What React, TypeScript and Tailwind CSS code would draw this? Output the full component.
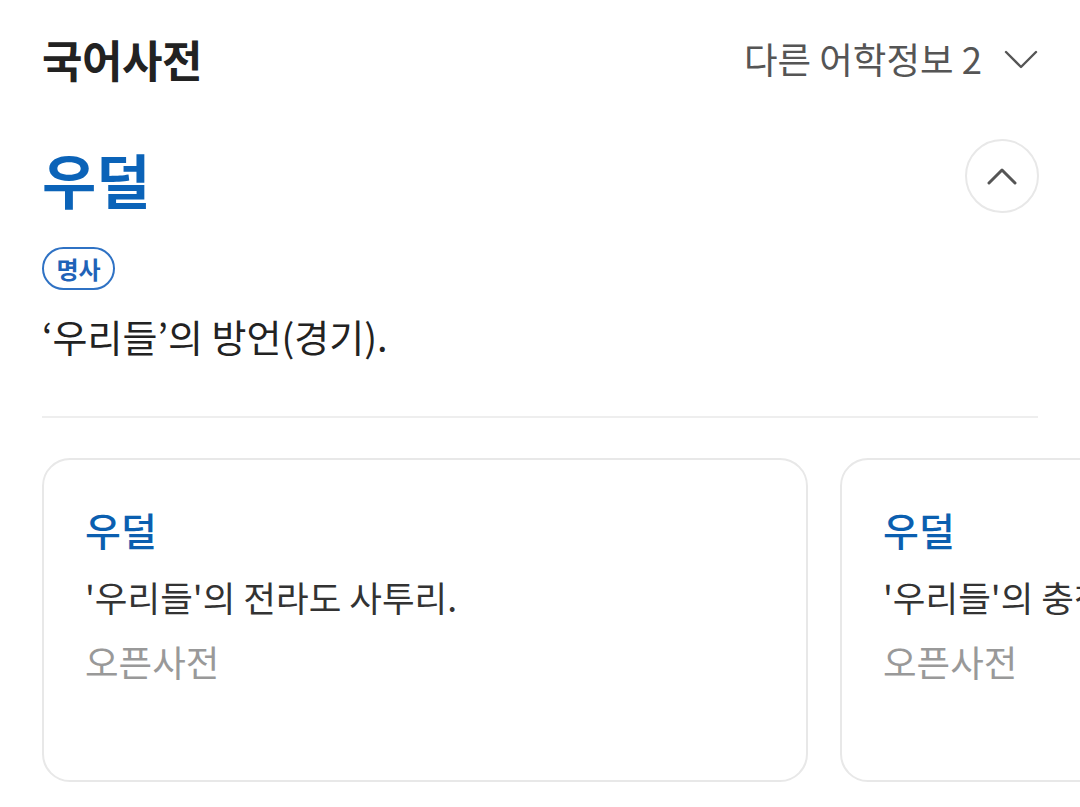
import React from "react";

const font = { fontFamily: '"Noto Sans CJK KR", "Noto Sans", sans-serif' };

function ChevronDown() {
  return (
    <svg width="34" height="22" viewBox="0 0 34 22" fill="none">
      <path d="M2 4 L17 19 L32 4" stroke="#555" strokeWidth="2.4" strokeLinecap="round" strokeLinejoin="round" />
    </svg>
  );
}

function ChevronUp() {
  return (
    <svg width="30" height="18" viewBox="0 0 30 18" fill="none">
      <path d="M2 16 L15 3 L28 16" stroke="#555" strokeWidth="3" strokeLinecap="round" strokeLinejoin="round" />
    </svg>
  );
}

function Card({ def }: { def: string }) {
  return (
    <div className="shrink-0 w-[766px] h-[324px] rounded-[28px] border-2 border-[#e8e8e8] pl-[41px] pt-[42px] flex flex-col">
      <div className="text-[39px] leading-[54px] text-[#0b5fb0] font-medium">우덜</div>
      <div className="text-[35.5px] leading-[50px] text-[#333] mt-[16px] whitespace-nowrap">{def}</div>
      <div className="text-[36.5px] leading-[50px] text-[#999] mt-[15px]">오픈사전</div>
    </div>
  );
}

export default function App() {
  return (
    <div className="w-[1080px] h-[807px] bg-white overflow-hidden" style={font}>
      <div className="px-[42px]">
        <div className="flex items-center justify-between h-[120px] pb-[2px]">
          <div className="text-[44px] font-bold text-[#222] tracking-[-0.5px]">국어사전</div>
          <div className="flex items-center gap-[22px]">
            <span className="text-[36.5px] text-[#555]">다른 어학정보 2</span>
            <ChevronDown />
          </div>
        </div>
        <div className="flex items-start justify-between">
          <div className="text-[59px] leading-[70px] font-bold text-[#0b63b8] mt-[24px]">우덜</div>
          <button className="w-[74px] h-[74px] rounded-full border-2 border-[#e8e8e8] flex items-center justify-center mt-[19px] mr-[-1px]">
            <ChevronUp />
          </button>
        </div>
        <div className="mt-[33px] flex">
          <span className="inline-flex items-center justify-center h-[43px] w-[73px] rounded-full border-2 border-[#2f72c4] text-[24px] font-bold text-[#1f63b8] leading-none">명사</span>
        </div>
        <div className="text-[38px] leading-[52px] text-[#222] mt-[20px]">‘우리들’의 방언(경기).</div>
        <div className="h-[2px] bg-[#eeeeee] mt-[54px]"></div>
      </div>
      <div className="flex gap-[32px] pl-[42px] mt-[40px]">
        <Card def="'우리들'의 전라도 사투리." />
        <Card def="'우리들'의 충청도 사투리." />
      </div>
    </div>
  );
}
